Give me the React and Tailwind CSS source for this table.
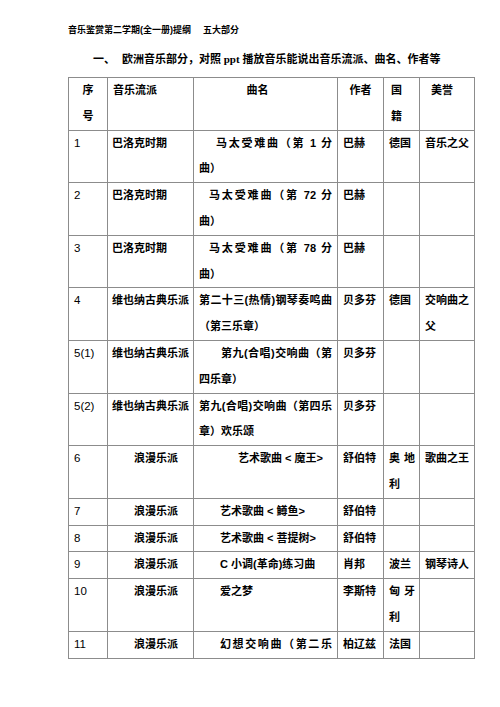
import React from "react";

const cjk = { fontFamily: '"Liberation Sans", "Noto Sans CJK SC", sans-serif' };
const serifMix = { fontFamily: '"Liberation Serif", "Noto Sans CJK SC", serif' };

// one line justified across the cell (like Word's distributed text)
function J({ children, pl = 0 }) {
  return (
    <div className="[text-align-last:justify] text-justify whitespace-nowrap" style={{ paddingLeft: pl }}>
      {children}
    </div>
  );
}

function L({ children, pl = 0 }) {
  return <div className="whitespace-nowrap" style={{ paddingLeft: pl }}>{children}</div>;
}

const rows = [
  {
    no: "1",
    school: "巴洛克时期",
    name: [<J key="a" pl={17}>马太受难曲（第 1 分</J>, <L key="b">曲）</L>],
    author: "巴赫",
    country: [<L key="a">德国</L>],
    fame: [<L key="a">音乐之父</L>],
  },
  {
    no: "2",
    school: "巴洛克时期",
    name: [<J key="a" pl={10}>马太受难曲（第 72 分</J>, <L key="b">曲）</L>],
    author: "巴赫",
  },
  {
    no: "3",
    school: "巴洛克时期",
    name: [<J key="a" pl={10}>马太受难曲（第 78 分</J>, <L key="b">曲）</L>],
    author: "巴赫",
  },
  {
    no: "4",
    school: "维也纳古典乐派",
    name: [<J key="a">第二十三(热情)钢琴奏鸣曲</J>, <L key="b">（第三乐章）</L>],
    author: "贝多芬",
    country: [<L key="a">德国</L>],
    fame: [<L key="a">交响曲之</L>, <L key="b">父</L>],
  },
  {
    no: "5(1)",
    school: "维也纳古典乐派",
    name: [<J key="a" pl={22}>第九(合唱)交响曲（第</J>, <L key="b">四乐章）</L>],
    author: "贝多芬",
  },
  {
    no: "5(2)",
    school: "维也纳古典乐派",
    name: [<J key="a">第九(合唱)交响曲（第四乐</J>, <L key="b">章）欢乐颂</L>],
    author: "贝多芬",
  },
  {
    no: "6",
    school: "浪漫乐派",
    indent: true,
    name: [<L key="a" pl={39}>艺术歌曲 &lt; 魔王&gt;</L>],
    author: "舒伯特",
    country: [<J key="a">奥 地</J>, <L key="b">利</L>],
    fame: [<L key="a">歌曲之王</L>],
  },
  {
    no: "7",
    school: "浪漫乐派",
    indent: true,
    name: [<L key="a" pl={21}>艺术歌曲 &lt; 鳟鱼&gt;</L>],
    author: "舒伯特",
  },
  {
    no: "8",
    school: "浪漫乐派",
    indent: true,
    name: [<L key="a" pl={21}>艺术歌曲 &lt; 菩提树&gt;</L>],
    author: "舒伯特",
  },
  {
    no: "9",
    school: "浪漫乐派",
    indent: true,
    name: [<L key="a" pl={21}>C 小调(革命)练习曲</L>],
    author: "肖邦",
    country: [<L key="a">波兰</L>],
    fame: [<L key="a">钢琴诗人</L>],
  },
  {
    no: "10",
    school: "浪漫乐派",
    indent: true,
    name: [<L key="a" pl={21}>爱之梦</L>],
    author: "李斯特",
    country: [<J key="a">匈 牙</J>, <L key="b">利</L>],
  },
  {
    no: "11",
    school: "浪漫乐派",
    indent: true,
    name: [<J key="a" pl={21}>幻想交响曲（第二乐</J>],
    author: "柏辽兹",
    country: [<L key="a">法国</L>],
  },
];

const td = "border border-[#8c8c8c] align-top px-[5px] leading-[25.8px] whitespace-nowrap overflow-hidden";

export default function App() {
  return (
    <div className="w-[500px] h-[707px] bg-white text-black overflow-hidden" style={cjk}>
      <div className="pl-[68px] pt-[24px]">
        <div className="text-[9px] leading-[12px] font-bold">
          音乐鉴赏第二学期(全一册)提纲<span className="inline-block w-[12px]"></span>五大部分
        </div>
        <div className="mt-[15px] pl-[25px] text-[11px] leading-[16px] font-bold flex" style={serifMix}>
          <span className="inline-block w-[29px] shrink-0">一、</span>
          <span>欧洲音乐部分，对照 ppt 播放音乐能说出音乐流派、曲名、作者等</span>
        </div>
        <table className="mt-[10px] border-collapse table-fixed w-[406px] text-[11px] font-bold">
          <colgroup>
            <col className="w-[39px]" />
            <col className="w-[86px]" />
            <col className="w-[144px]" />
            <col className="w-[46px]" />
            <col className="w-[36px]" />
            <col className="w-[55px]" />
          </colgroup>
          <tbody>
            <tr>
              <td className={td + " text-center"}>
                <div>序</div>
                <div>号</div>
              </td>
              <td className={td}>音乐流派</td>
              <td className={td + " text-center"}>
                <span className="pr-[16px]">曲名</span>
              </td>
              <td className={td + " text-center"}>作者</td>
              <td className={td}>
                <div className="pl-[2px]">国</div>
                <div className="pl-[2px]">籍</div>
              </td>
              <td className={td}>
                <div className="pl-[6px]">美誉</div>
              </td>
            </tr>
            {rows.map((r) => (
              <tr key={r.no}>
                <td className={td + " font-normal text-[11.5px]"}>{r.no}</td>
                <td className={td + " !px-[4px]"}>
                  <div style={{ paddingLeft: r.indent ? 22 : 0 }}>{r.school}</div>
                </td>
                <td className={td}>{r.name}</td>
                <td className={td}>{r.author}</td>
                <td className={td + " !pl-[5px] !pr-[4px]"}>{r.country}</td>
                <td className={td}>{r.fame}</td>
              </tr>
            ))}
          </tbody>
        </table>
      </div>
    </div>
  );
}
